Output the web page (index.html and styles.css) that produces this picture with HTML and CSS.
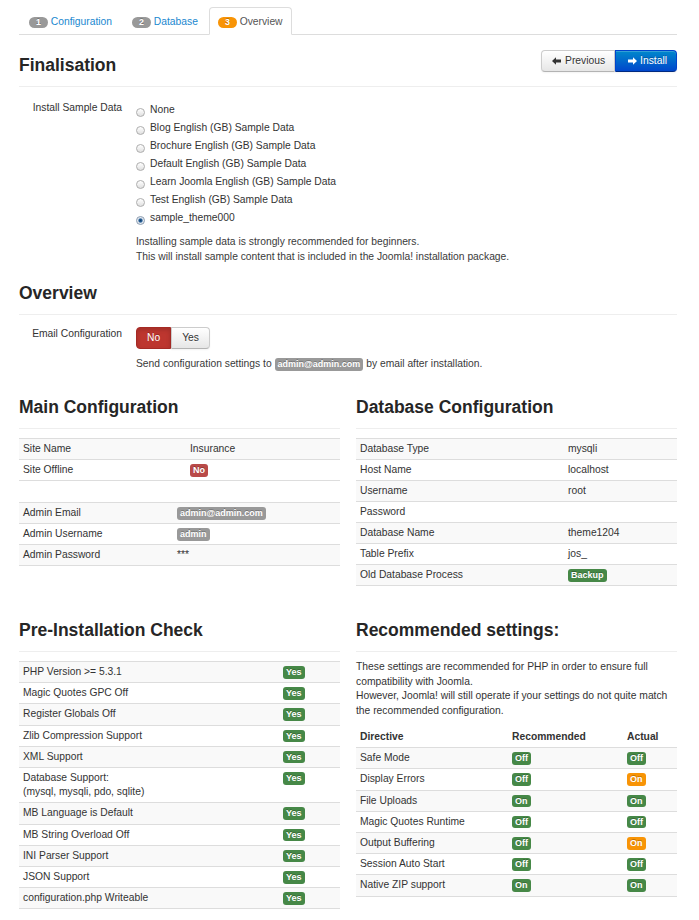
FILE: index.html
```html
<!DOCTYPE html>
<html lang="en">
<head>
<meta charset="utf-8">
<title>Joomla! Installation - Overview</title>
<link rel="stylesheet" href="styles.css">
</head>
<body>
<div class="page">
  <ul class="tabs">
    <li class="tab"><span class="badge">1</span> Configuration</li>
    <li class="tab"><span class="badge">2</span> Database</li>
    <li class="tab active"><span class="badge badge-warning">3</span> Overview</li>
  </ul>

  <div class="section-head head-first">
    <h3>Finalisation</h3>
    <div class="btn-group">
      <button class="btn btn-prev"><svg class="ico" width="9" height="8" viewBox="0 0 9 8"><polygon points="0,4 4,0.3 4,2.6 9,2.6 9,5.4 4,5.4 4,7.7" fill="currentColor"/></svg>Previous</button>
      <button class="btn btn-primary"><svg class="ico" width="9" height="8" viewBox="0 0 9 8"><polygon points="9,4 5,0.3 5,2.6 0,2.6 0,5.4 5,5.4 5,7.7" fill="currentColor"/></svg>Install</button>
    </div>
  </div>

  <div class="form-row sample-row">
    <div class="control-label">Install Sample Data</div>
    <div class="controls">
      <label class="radio"><span class="radio-dot"></span>None</label>
      <label class="radio"><span class="radio-dot"></span>Blog English (GB) Sample Data</label>
      <label class="radio"><span class="radio-dot"></span>Brochure English (GB) Sample Data</label>
      <label class="radio"><span class="radio-dot"></span>Default English (GB) Sample Data</label>
      <label class="radio"><span class="radio-dot"></span>Learn Joomla English (GB) Sample Data</label>
      <label class="radio"><span class="radio-dot"></span>Test English (GB) Sample Data</label>
      <label class="radio"><span class="radio-dot checked"></span>sample_theme000</label>
      <p class="help">Installing sample data is strongly recommended for beginners.<br>This will install sample content that is included in the Joomla! installation package.</p>
    </div>
  </div>

  <div class="section-head head-overview">
    <h3>Overview</h3>
  </div>

  <div class="form-row email-row">
    <div class="control-label">Email Configuration</div>
    <div class="controls">
      <div class="toggle"><span class="btn btn-danger">No</span><span class="btn btn-yes">Yes</span></div>
      <p class="help">Send configuration settings to <span class="label">admin@admin.com</span> by email after installation.</p>
    </div>
  </div>

  <div class="cols cols-config">
    <div class="col">
      <div class="section-head"><h3>Main Configuration</h3></div>
      <table class="table t-site">
        <colgroup><col class="c-site"><col></colgroup>
        <tbody>
          <tr><td>Site Name</td><td>Insurance</td></tr>
          <tr><td>Site Offline</td><td><span class="label label-important">No</span></td></tr>
        </tbody>
      </table>
      <table class="table t-admin">
        <colgroup><col class="c-admin"><col></colgroup>
        <tbody>
          <tr><td>Admin Email</td><td><span class="label">admin@admin.com</span></td></tr>
          <tr><td>Admin Username</td><td><span class="label">admin</span></td></tr>
          <tr><td>Admin Password</td><td>***</td></tr>
        </tbody>
      </table>
    </div>
    <div class="col">
      <div class="section-head"><h3>Database Configuration</h3></div>
      <table class="table t-db">
        <colgroup><col class="c-db"><col></colgroup>
        <tbody>
          <tr><td>Database Type</td><td>mysqli</td></tr>
          <tr><td>Host Name</td><td>localhost</td></tr>
          <tr><td>Username</td><td>root</td></tr>
          <tr><td>Password</td><td></td></tr>
          <tr><td>Database Name</td><td>theme1204</td></tr>
          <tr><td>Table Prefix</td><td>jos_</td></tr>
          <tr><td>Old Database Process</td><td><span class="label label-success">Backup</span></td></tr>
        </tbody>
      </table>
    </div>
  </div>

  <div class="cols cols-check">
    <div class="col">
      <div class="section-head"><h3>Pre-Installation Check</h3></div>
      <table class="table t-check">
        <colgroup><col class="c-check"><col></colgroup>
        <tbody>
          <tr><td>PHP Version &gt;= 5.3.1</td><td><span class="label label-success">Yes</span></td></tr>
          <tr><td>Magic Quotes GPC Off</td><td><span class="label label-success">Yes</span></td></tr>
          <tr><td>Register Globals Off</td><td><span class="label label-success">Yes</span></td></tr>
          <tr><td>Zlib Compression Support</td><td><span class="label label-success">Yes</span></td></tr>
          <tr><td>XML Support</td><td><span class="label label-success">Yes</span></td></tr>
          <tr><td>Database Support:<br>(mysql, mysqli, pdo, sqlite)</td><td><span class="label label-success">Yes</span></td></tr>
          <tr><td>MB Language is Default</td><td><span class="label label-success">Yes</span></td></tr>
          <tr><td>MB String Overload Off</td><td><span class="label label-success">Yes</span></td></tr>
          <tr><td>INI Parser Support</td><td><span class="label label-success">Yes</span></td></tr>
          <tr><td>JSON Support</td><td><span class="label label-success">Yes</span></td></tr>
          <tr><td>configuration.php Writeable</td><td><span class="label label-success">Yes</span></td></tr>
        </tbody>
      </table>
    </div>
    <div class="col">
      <div class="section-head"><h3>Recommended settings:</h3></div>
      <p class="rec-text">These settings are recommended for PHP in order to ensure full compatibility with Joomla.<br>However, Joomla! will still operate if your settings do not quite match the recommended configuration.</p>
      <table class="table t-rec">
        <colgroup><col class="c-dir"><col class="c-recd"><col></colgroup>
        <thead>
          <tr><th>Directive</th><th>Recommended</th><th>Actual</th></tr>
        </thead>
        <tbody>
          <tr><td>Safe Mode</td><td><span class="label label-success">Off</span></td><td><span class="label label-success">Off</span></td></tr>
          <tr><td>Display Errors</td><td><span class="label label-success">Off</span></td><td><span class="label label-warning">On</span></td></tr>
          <tr><td>File Uploads</td><td><span class="label label-success">On</span></td><td><span class="label label-success">On</span></td></tr>
          <tr><td>Magic Quotes Runtime</td><td><span class="label label-success">Off</span></td><td><span class="label label-success">Off</span></td></tr>
          <tr><td>Output Buffering</td><td><span class="label label-success">Off</span></td><td><span class="label label-warning">On</span></td></tr>
          <tr><td>Session Auto Start</td><td><span class="label label-success">Off</span></td><td><span class="label label-success">Off</span></td></tr>
          <tr><td>Native ZIP support</td><td><span class="label label-success">On</span></td><td><span class="label label-success">On</span></td></tr>
        </tbody>
      </table>
    </div>
  </div>
</div>
</body>
</html>
```

FILE: styles.css
```css
* { box-sizing: border-box; }

body {
  margin: 0;
  background: #fff;
  color: #333;
  font-family: "Liberation Sans", Arial, sans-serif;
  font-size: 10.3px;
  line-height: 14px;
}

.page {
  width: 699px;
  padding: 7px 22px 20px 19px;
}

/* Tabs */
.tabs {
  display: flex;
  margin: 0;
  padding: 0 0 0 1px;
  list-style: none;
  height: 28px;
  border-bottom: 1px solid #ddd;
}
.tab {
  height: 28px;
  padding: 7px 8px 5px;
  margin-right: 2px;
  border: 1px solid transparent;
  border-radius: 4px 4px 0 0;
  color: #1a88cf;
  line-height: 14px;
  white-space: nowrap;
}
.tab.active {
  border-color: #ddd #ddd #fff;
  background: #fff;
  color: #555;
}
.badge {
  display: inline-block;
  padding: 1px 7px;
  border-radius: 6px;
  background: #999;
  color: #fff;
  font-size: 8.8px;
  font-weight: bold;
  line-height: 9.3px;
  text-shadow: 0 -1px 0 rgba(0,0,0,.25);
}
.badge-warning { background: #f89406; }

/* Section headers */
.section-head {
  display: flex;
  justify-content: space-between;
  align-items: flex-start;
  padding-bottom: 10px;
  border-bottom: 1px solid #eee;
}
.section-head h3 {
  margin: 0;
  font-size: 17.5px;
  line-height: 22px;
  font-weight: bold;
  color: #262626;
}
.head-first { margin-top: 19px; }
.head-overview { margin-top: 18px; }

/* Buttons */
.btn-group {
  display: flex;
  margin-top: -4px;
}
.btn {
  display: inline-block;
  margin: 0;
  padding: 3px 10px;
  border: 1px solid #ccc;
  border-bottom-color: #b3b3b3;
  background: linear-gradient(#ffffff, #e6e6e6);
  color: #333;
  font-family: inherit;
  font-size: 10.3px;
  line-height: 14px;
  text-shadow: 0 1px 1px rgba(255,255,255,.75);
  box-shadow: inset 0 1px 0 rgba(255,255,255,.2), 0 1px 2px rgba(0,0,0,.05);
  cursor: pointer;
}
.btn-group .btn:first-child { border-radius: 4px 0 0 4px; }
.btn-group .btn:last-child { border-radius: 0 4px 4px 0; }
.btn .ico {
  margin-right: 4px;
  vertical-align: -0.5px;
}
.btn-prev { padding-left: 10px; padding-right: 9px; }
.btn-primary {
  padding-left: 12px;
  padding-right: 9px;
  border-color: #0044cc #0044cc #002a80;
  background: linear-gradient(#0088cc, #0047cc);
  color: #fff;
  text-shadow: 0 -1px 0 rgba(0,0,0,.25);
}
.btn-primary .ico { margin-right: 3px; }

.toggle { display: flex; }
.toggle .btn:first-child { border-radius: 4px 0 0 4px; }
.toggle .btn:last-child { border-radius: 0 4px 4px 0; }
.btn-danger {
  border-color: #a52a25;
  background: #bd362f;
  color: #fff;
  text-shadow: 0 -1px 0 rgba(0,0,0,.25);
  box-shadow: inset 0 2px 4px rgba(0,0,0,.15);
}

/* Form rows */
.form-row {
  display: grid;
  grid-template-columns: 103px 1fr;
  column-gap: 14px;
}
.sample-row { margin-top: 14px; }
.email-row { margin-top: 12px; }
.control-label {
  text-align: right;
  line-height: 14px;
}
.radio {
  display: block;
  line-height: 18px;
}
.radio-dot {
  display: inline-block;
  width: 9px;
  height: 9px;
  margin-right: 5px;
  border: 1px solid #adadad;
  border-radius: 50%;
  background: linear-gradient(#ffffff, #e0e0e0);
  vertical-align: -3.5px;
}
.radio-dot.checked {
  border-color: #8a9bb0;
  background: radial-gradient(circle, #123f6b 0, #2a629a 1.6px, #dfe6ee 2.6px, #f4f4f4 4px);
}
.help {
  margin: 7px 0 0;
  line-height: 15px;
  color: #3a3a3a;
}

/* Labels */
.label {
  display: inline-block;
  padding: 1px 3px;
  border-radius: 3px;
  background: #999;
  color: #fff;
  font-size: 9px;
  font-weight: bold;
  line-height: 10.5px;
  white-space: nowrap;
  text-shadow: 0 -1px 0 rgba(0,0,0,.25);
}
.label-success { background: #468847; }
.label-important { background: #b94a48; }
.label-warning { background: #f89406; }

/* Columns */
.cols {
  display: grid;
  grid-template-columns: 321px 321px;
  column-gap: 16px;
}
.cols-config { margin-top: 25px; }
.cols-check { margin-top: 33px; }

/* Tables */
.table {
  width: 100%;
  margin-top: 9px;
  border-collapse: collapse;
  table-layout: fixed;
  border-bottom: 1px solid #ddd;
}
.table td,
.table th {
  padding: 3px 4px;
  border-top: 1px solid #ddd;
  line-height: 14px;
  text-align: left;
  vertical-align: top;
  font-weight: normal;
}
.table thead th {
  border-top: 0;
  font-weight: bold;
}
.table tbody tr:nth-child(odd) td { background: #f9f9f9; }
.t-admin { margin-top: 21px; }
.t-check td,
.t-rec td,
.t-rec th { line-height: 14.2px; }

.c-site { width: 167px; }
.c-admin { width: 154px; }
.c-db { width: 208px; }
.c-check { width: 260px; }
.c-dir { width: 152px; }
.c-recd { width: 115px; }

.rec-text {
  margin: 8px 0 0;
  line-height: 14.5px;
}
```
